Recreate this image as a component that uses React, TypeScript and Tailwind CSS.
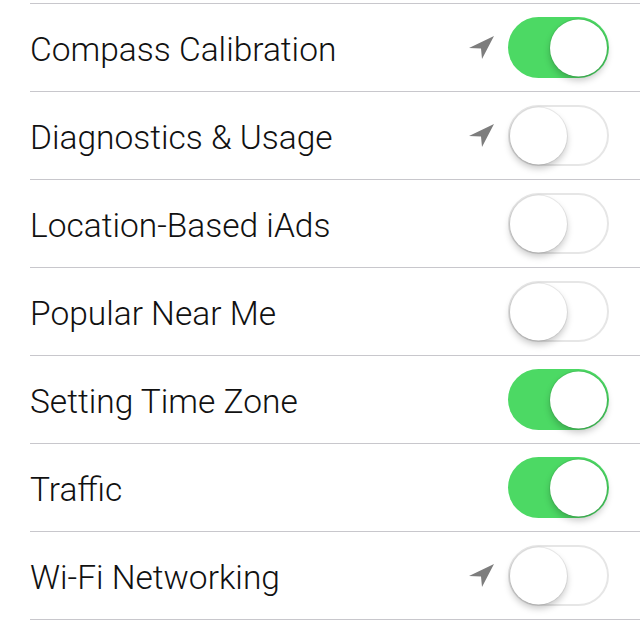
const ROWS = [
  { label: 'Compass Calibration', on: true, loc: true },
  { label: 'Diagnostics & Usage', on: false, loc: true },
  { label: 'Location-Based iAds', on: false, loc: false },
  { label: 'Popular Near Me', on: false, loc: false },
  { label: 'Setting Time Zone', on: true, loc: false },
  { label: 'Traffic', on: true, loc: false },
  { label: 'Wi-Fi Networking', on: false, loc: true },
]

function LocationArrow() {
  return (
    <svg width="28" height="26" viewBox="0 0 28 26" className="shrink-0">
      <polygon points="27,1 2,13 14,13.5 15,24" fill="#7d7d7d" />
    </svg>
  )
}

function Toggle({ on }: { on: boolean }) {
  return (
    <div
      className={`relative w-[101px] h-[61px] rounded-full shrink-0 ${
        on ? 'bg-[#4cd964]' : 'bg-white border-2 border-[#e6e6e6]'
      }`}
    >
      <div
        className={`absolute top-1/2 -translate-y-1/2 w-[57px] h-[57px] rounded-full bg-white shadow-[0_4px_7px_rgba(0,0,0,0.22),0_0_0_1px_rgba(0,0,0,0.07)] ${
          on ? 'right-[2px]' : 'left-0'
        }`}
      />
    </div>
  )
}

export default function App() {
  return (
    <div
      className="w-[640px] h-[621px] bg-white pt-[3px] overflow-hidden"
      style={{ fontFamily: 'Roboto, "Liberation Sans", sans-serif' }}
    >
      <div className="border-b border-[#c8c7cc] ml-[30px]">
        {ROWS.map((r) => (
          <div key={r.label} className="h-[88px] flex items-center pr-[31px] border-t border-[#c8c7cc]">
            <span className="flex-1 pt-[5px] text-[33.5px] font-light text-[#111]">{r.label}</span>
            {r.loc && (
              <div className="mr-[13px]">
                <LocationArrow />
              </div>
            )}
            <Toggle on={r.on} />
          </div>
        ))}
      </div>
    </div>
  )
}
